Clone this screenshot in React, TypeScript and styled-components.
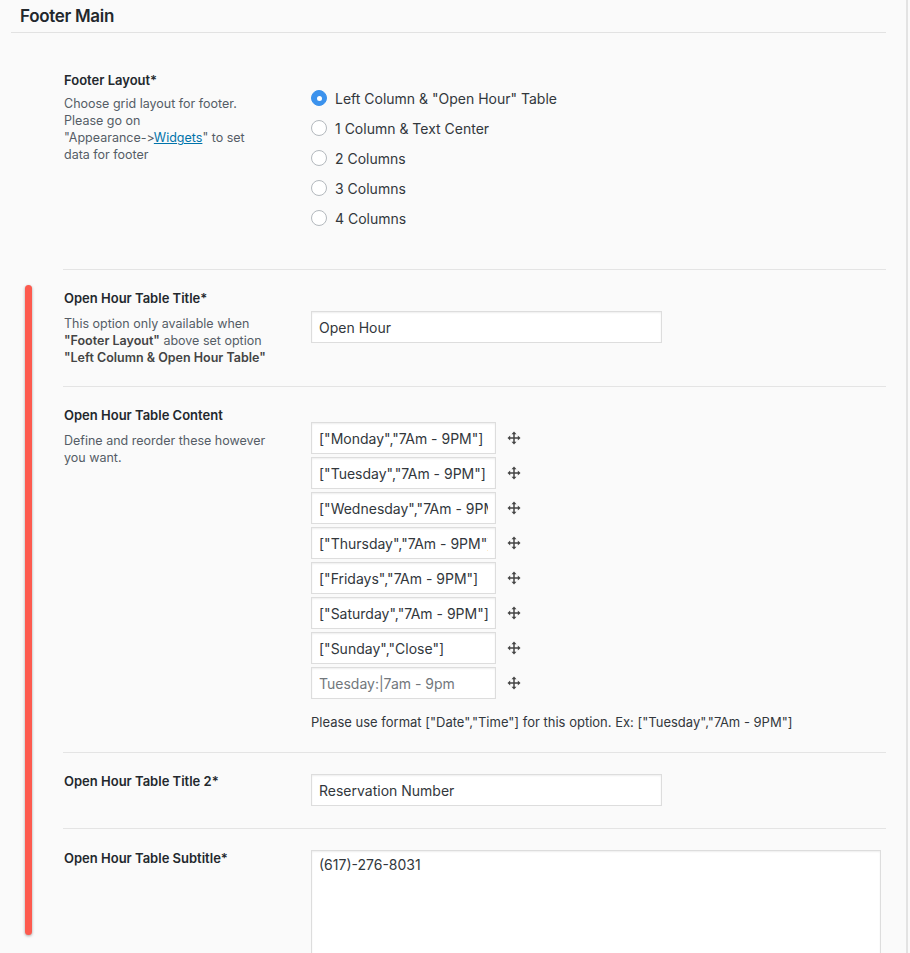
import React from 'react';
import styled, { createGlobalStyle } from 'styled-components';

const GlobalStyle = createGlobalStyle`
  body {
    margin: 0;
    background: #fafafa;
    font-family: Inter, 'Liberation Sans', Arial, sans-serif;
    font-feature-settings: 'calt' 0, 'liga' 0;
    color: #32373c;
  }
`;

// 전체 페이지
const Page = styled.div`
  width: 908px;
  min-height: 100vh;
  border-right: 2px solid #e3e3e3;
  padding: 0 20px 0 11px;
  box-sizing: border-box;
`;

// 섹션 제목
const SectionTitle = styled.h2`
  margin: 0;
  padding-left: 9px;
  height: 32px;
  line-height: 32px;
  font-size: 17px;
  font-weight: 600;
  letter-spacing: -0.3px;
  color: #23282d;
  border-bottom: 1px solid #e2e2e2;
`;

// 들여쓴 목록
const Indented = styled.div`
  margin-left: 52px;
  margin-top: 19px;
`;

// 빨간 막대가 붙은 그룹
const Group = styled.div`
  display: flex;
`;

const GroupBar = styled.div`
  flex: none;
  width: 7px;
  height: 650px;
  margin: 16px 31px 0 14px;
  border-radius: 4px;
  background: #fd5a4e;
  box-shadow: 0 1px 3px rgba(0, 0, 0, 0.35);
`;

const GroupRows = styled.div`
  flex: 1;
`;

// 옵션 한 줄
const Row = styled.div<{ $line?: boolean; $top?: number; $bottom: number }>`
  display: grid;
  grid-template-columns: 248px 1fr;
  padding: ${(p) => p.$top ?? 20}px 0 ${(p) => p.$bottom}px;
  border-top: ${(p) => (p.$line ? '1px solid #e4e4e4' : 'none')};
`;

const LabelCol = styled.div`
  padding-left: 1px;
`;

const Title = styled.div`
  font-size: 13px;
  line-height: 17px;
  font-weight: 600;
  color: #23282d;
`;

const Desc = styled.div<{ $gap: number }>`
  margin-top: ${(p) => p.$gap}px;
  font-size: 12.5px;
  line-height: 17px;
  color: #555d66;

  b {
    font-weight: 600;
    color: #444;
  }

  a {
    color: #0073aa;
  }
`;

const FieldCol = styled.div<{ $top: number }>`
  padding-top: ${(p) => p.$top}px;
`;

// 라디오 목록
const RadioItem = styled.label`
  display: flex;
  align-items: center;
  height: 30px;
  font-size: 14px;
  color: #32373c;
  gap: 8px;
`;

const RadioDot = styled.span<{ $checked?: boolean }>`
  width: 16px;
  height: 16px;
  box-sizing: border-box;
  border-radius: 50%;
  border: 1px solid ${(p) => (p.$checked ? '#3b92ed' : '#b4b9be')};
  background: ${(p) => (p.$checked ? '#3b92ed' : '#fff')};
  display: flex;
  align-items: center;
  justify-content: center;

  &::after {
    content: '';
    display: ${(p) => (p.$checked ? 'block' : 'none')};
    width: 5px;
    height: 5px;
    border-radius: 50%;
    background: #fff;
  }
`;

// 입력 폼
const TextInput = styled.input<{ $width: number }>`
  display: block;
  width: ${(p) => p.$width}px;
  height: 32px;
  box-sizing: border-box;
  padding: 0 7px;
  border: 1px solid #ddd;
  box-shadow: inset 0 1px 2px rgba(0, 0, 0, 0.07);
  background: #fff;
  font-family: Inter, 'Liberation Sans', Arial, sans-serif;
  font-feature-settings: 'calt' 0, 'liga' 0;
  font-size: 14px;
  color: #32373c;
  outline: none;

  &::placeholder {
    color: #72777c;
  }
`;

const TextArea = styled.textarea`
  display: block;
  width: 570px;
  height: 130px;
  box-sizing: border-box;
  padding: 4px 7px;
  border: 1px solid #ddd;
  box-shadow: inset 0 1px 2px rgba(0, 0, 0, 0.07);
  background: #fff;
  font-family: Inter, 'Liberation Sans', Arial, sans-serif;
  font-size: 14px;
  line-height: 19px;
  color: #32373c;
  resize: none;
  outline: none;
`;

// 정렬 가능한 목록
const SortList = styled.div`
  display: flex;
  flex-direction: column;
  gap: 3px;
`;

const SortItem = styled.div`
  display: flex;
  align-items: center;
  gap: 11px;
`;

const Handle = styled.span`
  display: flex;
  width: 14px;
  height: 14px;
  color: #444;
  cursor: move;
`;

const Hint = styled.div`
  margin-top: 15px;
  font-size: 13px;
  line-height: 17px;
  color: #32373c;
`;

const MoveIcon = () => (
  <svg width="14" height="14" viewBox="0 0 14 14" fill="currentColor">
    <rect x="6.25" y="2.5" width="1.5" height="9" />
    <rect x="2.5" y="6.25" width="9" height="1.5" />
    <polygon points="7,0.5 9.5,3.2 4.5,3.2" />
    <polygon points="7,13.5 9.5,10.8 4.5,10.8" />
    <polygon points="0.5,7 3.2,4.5 3.2,9.5" />
    <polygon points="13.5,7 10.8,4.5 10.8,9.5" />
  </svg>
);

const layouts = [
  'Left Column & "Open Hour" Table',
  '1 Column & Text Center',
  '2 Columns',
  '3 Columns',
  '4 Columns',
];

const hours = [
  '["Monday","7Am - 9PM"]',
  '["Tuesday","7Am - 9PM"]',
  '["Wednesday","7Am - 9PM"]',
  '["Thursday","7Am - 9PM"]',
  '["Fridays","7Am - 9PM"]',
  '["Saturday","7Am - 9PM"]',
  '["Sunday","Close"]',
  '',
];

const App = () => {
  return (
    <Page>
      <GlobalStyle />
      <SectionTitle>Footer Main</SectionTitle>

      <Indented>
        <Row $bottom={36}>
          <LabelCol>
            <Title>Footer Layout*</Title>
            <Desc $gap={6}>
              Choose grid layout for footer.
              <br />
              Please go on
              <br />
              "Appearance-&gt;<a href="#widgets">Widgets</a>" to set
              <br />
              data for footer
            </Desc>
          </LabelCol>
          <FieldCol $top={11}>
            {layouts.map((label, i) => (
              <RadioItem key={label}>
                <RadioDot $checked={i === 0} />
                {label}
              </RadioItem>
            ))}
          </FieldCol>
        </Row>
      </Indented>

      <Group>
        <GroupBar />
        <GroupRows>
          <Row $line $bottom={20}>
            <LabelCol>
              <Title>Open Hour Table Title*</Title>
              <Desc $gap={8}>
                This option only available when
                <br />
                <b>"Footer Layout"</b> above set option
                <br />
                <b>"Left Column &amp; Open Hour Table"</b>
              </Desc>
            </LabelCol>
            <FieldCol $top={21}>
              <TextInput $width={351} defaultValue="Open Hour" />
            </FieldCol>
          </Row>

          <Row $line $bottom={21}>
            <LabelCol>
              <Title>Open Hour Table Content</Title>
              <Desc $gap={8}>
                Define and reorder these however
                <br />
                you want.
              </Desc>
            </LabelCol>
            <FieldCol $top={15}>
              <SortList>
                {hours.map((value, i) => (
                  <SortItem key={i}>
                    <TextInput $width={185} defaultValue={value} placeholder="Tuesday:|7am - 9pm" />
                    <Handle>
                      <MoveIcon />
                    </Handle>
                  </SortItem>
                ))}
              </SortList>
              <Hint>Please use format ["Date","Time"] for this option. Ex: ["Tuesday","7Am - 9PM"]</Hint>
            </FieldCol>
          </Row>

          <Row $line $bottom={22}>
            <LabelCol>
              <Title>Open Hour Table Title 2*</Title>
            </LabelCol>
            <FieldCol $top={1}>
              <TextInput $width={351} defaultValue="Reservation Number" />
            </FieldCol>
          </Row>

          <Row $line $top={21} $bottom={20}>
            <LabelCol>
              <Title>Open Hour Table Subtitle*</Title>
            </LabelCol>
            <FieldCol $top={0}>
              <TextArea defaultValue="(617)-276-8031" />
            </FieldCol>
          </Row>
        </GroupRows>
      </Group>
    </Page>
  );
};

export default App;
